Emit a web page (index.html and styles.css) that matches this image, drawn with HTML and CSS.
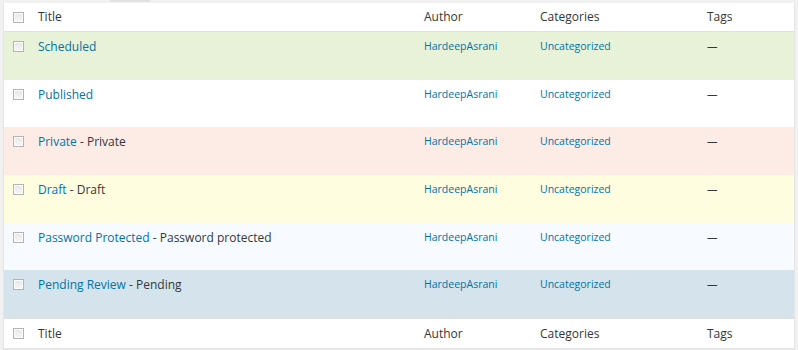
FILE: index.html
```html
<!DOCTYPE html>
<html lang="en">
<head>
<meta charset="UTF-8">
<title>Posts</title>
<link rel="stylesheet" href="styles.css">
</head>
<body>
	<div class="tabstub"></div>
	<div class="posts">
		<div class="row head">
			<div class="cb"><span class="box"></span></div>
			<div class="c-title">Title</div>
			<div class="c-author">Author</div>
			<div class="c-cat">Categories</div>
			<div class="c-tags">Tags</div>
		</div>
		<div class="row scheduled">
			<div class="cb"><span class="box"></span></div>
			<div class="c-title"><a href="#">Scheduled</a></div>
			<div class="c-author"><a href="#">HardeepAsrani</a></div>
			<div class="c-cat"><a href="#">Uncategorized</a></div>
			<div class="c-tags">—</div>
		</div>
		<div class="row published">
			<div class="cb"><span class="box"></span></div>
			<div class="c-title"><a href="#">Published</a></div>
			<div class="c-author"><a href="#">HardeepAsrani</a></div>
			<div class="c-cat"><a href="#">Uncategorized</a></div>
			<div class="c-tags">—</div>
		</div>
		<div class="row private">
			<div class="cb"><span class="box"></span></div>
			<div class="c-title"><a href="#">Private</a> - Private</div>
			<div class="c-author"><a href="#">HardeepAsrani</a></div>
			<div class="c-cat"><a href="#">Uncategorized</a></div>
			<div class="c-tags">—</div>
		</div>
		<div class="row draft">
			<div class="cb"><span class="box"></span></div>
			<div class="c-title"><a href="#">Draft</a> - Draft</div>
			<div class="c-author"><a href="#">HardeepAsrani</a></div>
			<div class="c-cat"><a href="#">Uncategorized</a></div>
			<div class="c-tags">—</div>
		</div>
		<div class="row password">
			<div class="cb"><span class="box"></span></div>
			<div class="c-title"><a href="#">Password Protected</a> - Password protected</div>
			<div class="c-author"><a href="#">HardeepAsrani</a></div>
			<div class="c-cat"><a href="#">Uncategorized</a></div>
			<div class="c-tags">—</div>
		</div>
		<div class="row pending">
			<div class="cb"><span class="box"></span></div>
			<div class="c-title"><a href="#">Pending Review</a> - Pending</div>
			<div class="c-author"><a href="#">HardeepAsrani</a></div>
			<div class="c-cat"><a href="#">Uncategorized</a></div>
			<div class="c-tags">—</div>
		</div>
		<div class="row foot">
			<div class="cb"><span class="box"></span></div>
			<div class="c-title">Title</div>
			<div class="c-author">Author</div>
			<div class="c-cat">Categories</div>
			<div class="c-tags">Tags</div>
		</div>
	</div>
</body>
</html>
```
FILE: styles.css
```css
*{margin: 0;padding: 0;box-sizing: border-box;}
body{
	background: #f1f1f1;
	font-family: "Open Sans", "Liberation Sans", sans-serif;
	color: #32373c;
	width: 798px;
	height: 350px;
	overflow: hidden;
	padding: 0 3px 0 3px;
}
.tabstub{
	width: 40px;
	height: 2px;
	margin-left: 107px;
	background: #e2e2e2;
	margin-bottom: 1px;
}
.posts{
	background: #fff;
	border: 1px solid #e5e5e5;
	border-top: 0;
	box-shadow: 0 1px 1px rgba(0,0,0,.04);
}
.row{
	display: grid;
	grid-template-columns: 34px 386px 116px 167px 1fr;
	height: 47.67px;
	padding-top: 5px;
	font-size: 12px;
	line-height: 19px;
}
.row a{color: #0073aa;text-decoration: none;}
.row .c-author, .row .c-cat, .row .c-tags{font-size: 10.5px;}
.head, .foot{height: 29px;padding-top: 4px;color: #32373c;}
.head .c-author, .head .c-cat, .head .c-tags,
.foot .c-author, .foot .c-cat, .foot .c-tags{font-size: 12px;}
.head{border-bottom: 1px solid #e1e1e1;}
.head .cb{padding-top: 5px;}
.foot{border-top: 1px solid #e1e1e1;height: 30px;padding-top: 5px;}
.cb{padding: 4px 0 0 9px;}
.box{
	display: block;
	width: 11px;
	height: 11px;
	border: 1px solid #b4b4b4;
	background: linear-gradient(#e6e6e6, #f8f8f8);
	box-shadow: inset 0 0 0 1px #fbfbfb;
}
.scheduled{background: #e8f2d8;}
.published{background: #fff;}
.private{background: #fdebe6;}
.draft{background: #fefde0;}
.password{background: #f7fbff;}
.pending{background: #d5e4ec;}
```
